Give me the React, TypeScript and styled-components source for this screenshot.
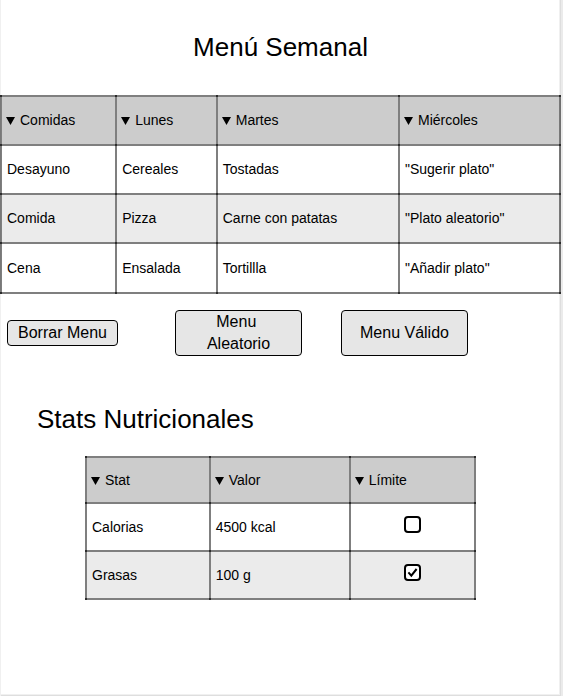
import React, { useState } from "react";
import styled, { createGlobalStyle } from "styled-components";

const GlobalStyle = createGlobalStyle`
  *, *::before, *::after { box-sizing: border-box; }
  body {
    margin: 0;
    background: #ebebeb;
    color: #000;
    font-family: "Liberation Sans", Arial, sans-serif;
  }
`;

const Page = styled.main`
  min-height: 100vh;
  margin-right: 2px;
  padding-top: 30px;
  background: #fff;
  box-shadow: inset 1px 0 #f0f0f0, inset -1px -1px #dedede, inset -2px -2px #f0f0f0;
`;

const Title = styled.h1`
  margin: 0 0 31px;
  font-size: 26px;
  font-weight: 400;
  line-height: 34px;
  text-align: center;
`;

const SectionTitle = styled.h2`
  margin: 46px 0 20px 37px;
  font-size: 26px;
  font-weight: 400;
  line-height: 34px;
`;

const Table = styled.table<{ $maxWidth?: number }>`
  width: 100%;
  max-width: ${(p) => (p.$maxWidth ? `${p.$maxWidth}px` : "none")};
  margin: 0 auto;
  border-collapse: collapse;
  table-layout: fixed;
  font-size: 14px;
  line-height: 16px;
`;

const Col = styled.col<{ $share: number }>`
  width: ${(p) => p.$share}%;
`;

const Row = styled.tr<{ $height: number; $shaded?: boolean }>`
  height: ${(p) => p.$height}px;
  background: ${(p) => (p.$shaded ? "#ebebeb" : "transparent")};
`;

const HeadRow = styled(Row)`
  background: #ccc;
`;

const corner = "linear-gradient(#2b2b2b, #2b2b2b)";

const Cell = styled.td<{ $center?: boolean }>`
  position: relative;
  padding: 0 5px 1px;
  border: 2px solid rgba(0, 0, 0, 0.5);
  font-weight: 400;
  text-align: ${(p) => (p.$center ? "center" : "left")};
  vertical-align: middle;

  &::after {
    content: "";
    position: absolute;
    inset: -2px;
    pointer-events: none;
    background: ${corner} left top, ${corner} right top, ${corner} left bottom,
      ${corner} right bottom;
    background-size: 2px 2px;
    background-repeat: no-repeat;
  }
`;

const HeadCell = styled(Cell)`
  padding-left: 4px;
`;

const SortButton = styled.button`
  display: flex;
  align-items: center;
  gap: 5px;
  padding: 0;
  border: 0;
  background: none;
  color: inherit;
  font: inherit;
  cursor: pointer;
`;

const Actions = styled.div`
  display: grid;
  grid-template-columns: 168fr 166fr 220fr;
  align-items: center;
  justify-items: start;
  margin-top: 16px;
  padding-left: 7px;
`;

const ActionButton = styled.button<{ $large?: boolean }>`
  width: ${(p) => (p.$large ? 127 : 111)}px;
  min-height: ${(p) => (p.$large ? 46 : 26)}px;
  padding: 0 ${(p) => (p.$large ? 16 : 4)}px;
  border: 1px solid #000;
  border-radius: 4px;
  background: #e6e6e6;
  color: #000;
  font-family: inherit;
  font-size: 16px;
  line-height: 22px;
  cursor: pointer;
`;

const CheckLabel = styled.label`
  position: relative;
  display: inline-block;
  width: 17px;
  height: 17px;
  margin-bottom: 5px;
  vertical-align: middle;
`;

const CheckInput = styled.input`
  appearance: none;
  display: block;
  width: 17px;
  height: 17px;
  margin: 0;
  border: 2px solid #000;
  border-radius: 4px;
  background: #fff;
`;

const Tick = styled.svg`
  position: absolute;
  inset: 0;
  pointer-events: none;
`;

function SortHeader({ label }: { label: string }) {
  return (
    <HeadCell as="th" scope="col">
      <SortButton type="button">
        <svg width="9" height="10" viewBox="0 0 9 10" aria-hidden="true">
          <path d="M0 2H9L4.5 10Z" />
        </svg>
        {label}
      </SortButton>
    </HeadCell>
  );
}

function LimitCheck({ name, initial }: { name: string; initial: boolean }) {
  const [checked, setChecked] = useState(initial);
  return (
    <CheckLabel>
      <CheckInput
        type="checkbox"
        aria-label={`Límite ${name}`}
        checked={checked}
        onChange={(e) => setChecked(e.target.checked)}
      />
      {checked && (
        <Tick width="17" height="17" viewBox="0 0 17 17" aria-hidden="true">
          <path d="M4.4 8.4L7.3 11.6L12.6 5" fill="none" stroke="#000" strokeWidth="2" />
        </Tick>
      )}
    </CheckLabel>
  );
}

const days = ["Comidas", "Lunes", "Martes", "Miércoles"];
const meals = [
  ["Desayuno", "Cereales", "Tostadas", '"Sugerir plato"'],
  ["Comida", "Pizza", "Carne con patatas", '"Plato aleatorio"'],
  ["Cena", "Ensalada", "Tortillla", '"Añadir plato"'],
];
const stats = [
  { name: "Calorias", value: "4500 kcal", limit: false },
  { name: "Grasas", value: "100 g", limit: true },
];

export default function App() {
  return (
    <>
      <GlobalStyle />
      <Page>
        <Title>Menú Semanal</Title>
        <Table>
          <colgroup>
            <Col $share={20.6} />
            <Col $share={18} />
            <Col $share={32.6} />
            <Col $share={28.8} />
          </colgroup>
          <thead>
            <HeadRow $height={49}>
              {days.map((d) => (
                <SortHeader key={d} label={d} />
              ))}
            </HeadRow>
          </thead>
          <tbody>
            {meals.map((meal, i) => (
              <Row key={meal[0]} $height={i === 2 ? 50 : 49} $shaded={i % 2 === 1}>
                {meal.map((text) => (
                  <Cell key={text}>{text}</Cell>
                ))}
              </Row>
            ))}
          </tbody>
        </Table>
        <Actions>
          <ActionButton type="button">Borrar Menu</ActionButton>
          <ActionButton type="button" $large>
            Menu&nbsp; Aleatorio
          </ActionButton>
          <ActionButton type="button" $large>
            Menu Válido
          </ActionButton>
        </Actions>
        <SectionTitle>Stats Nutricionales</SectionTitle>
        <Table $maxWidth={391}>
          <colgroup>
            <Col $share={31.8} />
            <Col $share={36} />
            <Col $share={32.2} />
          </colgroup>
          <thead>
            <HeadRow $height={46}>
              <SortHeader label="Stat" />
              <SortHeader label="Valor" />
              <SortHeader label="Límite" />
            </HeadRow>
          </thead>
          <tbody>
            {stats.map((s, i) => (
              <Row key={s.name} $height={48} $shaded={i % 2 === 1}>
                <Cell>{s.name}</Cell>
                <Cell>{s.value}</Cell>
                <Cell $center>
                  <LimitCheck name={s.name} initial={s.limit} />
                </Cell>
              </Row>
            ))}
          </tbody>
        </Table>
      </Page>
    </>
  );
}
